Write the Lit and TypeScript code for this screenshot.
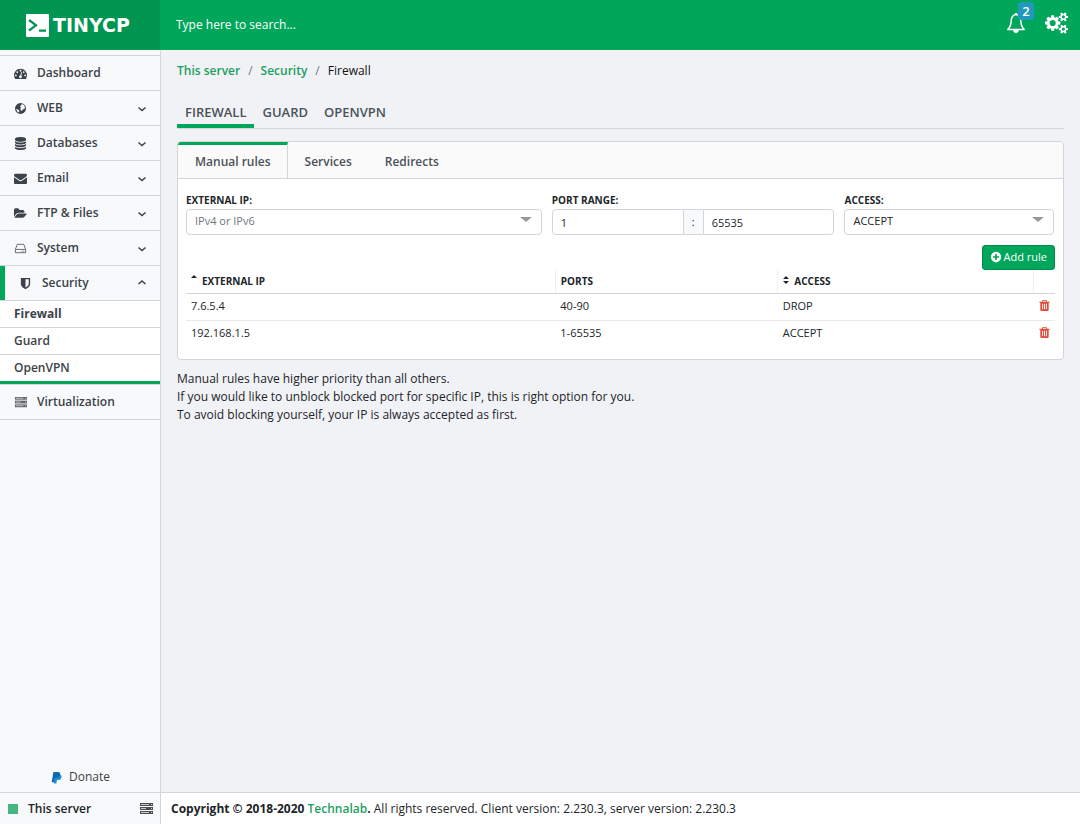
import { LitElement, html, css, svg, nothing } from "lit";
import { customElement, state } from "lit/decorators.js";
import { classMap } from "lit/directives/class-map.js";

const fa = (d: string, w = 1792) =>
  html`<svg class="fa" viewBox="0 0 ${w} 1792" aria-hidden="true">${svg`<path d=${d}></path>`}</svg>`;

const TACHOMETER =
  "M384 1152q0-53-37.5-90.5t-90.5-37.5-90.5 37.5-37.5 90.5 37.5 90.5 90.5 37.5 90.5-37.5 37.5-90.5zm192-448q0-53-37.5-90.5t-90.5-37.5-90.5 37.5-37.5 90.5 37.5 90.5 90.5 37.5 90.5-37.5 37.5-90.5zm428 481l101-382q6-26-7.5-48.5t-38.5-29.5-48 6.5-30 39.5l-101 382q-60 5-107 43.5t-63 98.5q-20 77 20 146t117 89 146-20 89-117q16-60-6-117t-72-91zm660-33q0-53-37.5-90.5t-90.5-37.5-90.5 37.5-37.5 90.5 37.5 90.5 90.5 37.5 90.5-37.5 37.5-90.5zm-640-640q0-53-37.5-90.5t-90.5-37.5-90.5 37.5-37.5 90.5 37.5 90.5 90.5 37.5 90.5-37.5 37.5-90.5zm448 192q0-53-37.5-90.5t-90.5-37.5-90.5 37.5-37.5 90.5 37.5 90.5 90.5 37.5 90.5-37.5 37.5-90.5zm320 448q0 261-141 483-19 29-54 29h-1402q-35 0-54-29-141-221-141-483 0-182 71-348t191-286 286-191 348-71 348 71 286 191 191 286 71 348z";
const DATABASE =
  "M896 768q237 0 443-43t325-127v170q0 69-103 128t-280 93.5-385 34.5-385-34.5-280-93.5-103-128v-170q119 84 325 127t443 43zm0 768q237 0 443-43t325-127v170q0 69-103 128t-280 93.5-385 34.5-385-34.5-280-93.5-103-128v-170q119 84 325 127t443 43zm0-384q237 0 443-43t325-127v170q0 69-103 128t-280 93.5-385 34.5-385-34.5-280-93.5-103-128v-170q119 84 325 127t443 43zm0-1152q208 0 385 34.5t280 93.5 103 128v128q0 69-103 128t-280 93.5-385 34.5-385-34.5-280-93.5-103-128v-128q0-69 103-128t280-93.5 385-34.5z";
const ENVELOPE =
  "M1792 710v794q0 66-47 113t-113 47h-1472q-66 0-113-47t-47-113v-794q44 49 101 87 362 246 497 345 57 42 92.5 65.5t94.5 48 110 24.5h2q51 0 110-24.5t94.5-48 92.5-65.5q170-123 498-345 57-39 100-87zm0-294q0 79-49 151t-122 123q-376 261-468 325-10 7-42.5 31t-54 38.5-52 32.5-57.5 27-50 9h-2q-23 0-50-9t-57.5-27-52-32.5-54-38.5-42.5-31q-91-64-262-182.5t-205-142.5q-62-42-117-115.5t-55-136.5q0-78 41.5-130t118.5-52h1472q65 0 112.5 47t47.5 113z";
const FOLDER =
  "M1879 952q0 31-31 66l-336 396q-43 51-120.5 86.5t-143.5 35.5h-1088q-34 0-60.5-13t-26.5-43q0-31 31-66l336-396q43-51 120.5-86.5t143.5-35.5h1088q34 0 60.5 13t26.5 43zm-343-344v160h-832q-94 0-197 47.5t-164 119.5l-337 396-5 6q0-4-.5-12.5t-.5-12.5v-960q0-92 66-158t158-66h320q92 0 158 66t66 158v32h544q92 0 158 66t66 158z";
const SHIELD =
  "M1344 960v-640h-448v1137q119-63 213-137 235-184 235-360zm192-768v768q0 86-33.5 170.5t-83 150-118 127.5-126.5 103-121 77.5-89.5 49.5-42.5 20q-12 6-26 6t-26-6q-16-7-42.5-20t-89.5-49.5-121-77.5-126.5-103-118-127.5-83-150-33.5-170.5v-768q0-26 19-45t45-19h1152q26 0 45 19t19 45z";
const PLUS_CIRCLE =
  "M1344 960v-128q0-26-19-45t-45-19h-256v-256q0-26-19-45t-45-19h-128q-26 0-45 19t-19 45v256h-256q-26 0-45 19t-19 45v128q0 26 19 45t45 19h256v256q0 26 19 45t45 19h128q26 0 45-19t19-45v-256h256q26 0 45-19t19-45zm320-64q0 209-103 385.5t-279.5 279.5-385.5 103-385.5-103-279.5-279.5-103-385.5 103-385.5 279.5-279.5 385.5-103 385.5 103 279.5 279.5 103 385.5z";
const TRASH =
  "M704 1376v-704q0-14-9-23t-23-9h-64q-14 0-23 9t-9 23v704q0 14 9 23t23 9h64q14 0 23-9t9-23zm256 0v-704q0-14-9-23t-23-9h-64q-14 0-23 9t-9 23v704q0 14 9 23t23 9h64q14 0 23-9t9-23zm256 0v-704q0-14-9-23t-23-9h-64q-14 0-23 9t-9 23v704q0 14 9 23t23 9h64q14 0 23-9t9-23zm-544-992h448l-48-117q-7-9-17-11h-317q-10 2-17 11zm928 32v64q0 14-9 23t-23 9h-96v948q0 83-47 143.5t-113 60.5h-832q-66 0-113-58.5t-47-141.5v-952h-96q-14 0-23-9t-9-23v-64q0-14 9-23t23-9h309l70-167q15-37 54-63t79-26h320q40 0 79 26t54 63l70 167h309q14 0 23 9t9 23z";
const COGS =
  "M896 896q0-106-75-181t-181-75-181 75-75 181 75 181 181 75 181-75 75-181zm768 512q0-52-38-90t-90-38-90 38-38 90q0 53 37.5 90.5t90.5 37.5 90.5-37.5 37.5-90.5zm0-1024q0-52-38-90t-90-38-90 38-38 90q0 53 37.5 90.5t90.5 37.5 90.5-37.5 37.5-90.5zm-384 421v185q0 10-7 19.5t-16 10.5l-155 24q-11 35-32 76 34 48 90 115 7 11 7 20 0 12-7 19-23 30-82.5 89.5t-78.5 59.5q-11 0-21-7l-115-90q-37 19-77 31-11 108-23 155-7 24-30 24h-186q-11 0-20-7.5t-10-17.5l-23-153q-34-10-75-31l-118 89q-7 7-20 7-11 0-21-8-144-133-144-160 0-9 7-19 10-14 41-53t47-61q-23-44-35-82l-152-24q-10-1-17-9.5t-7-19.5v-185q0-10 7-19.5t16-10.5l155-24q11-35 32-76-34-48-90-115-7-11-7-20 0-12 7-20 22-30 82-89t79-59q11 0 21 7l115 90q34-18 77-32 11-108 23-154 7-24 30-24h186q11 0 20 7.5t10 17.5l23 153q34 10 75 31l118-89q8-7 20-7 11 0 21 8 144 133 144 160 0 8-7 19-12 16-42 54t-45 60q23 48 34 82l152 23q10 2 17 10.5t7 19.5zm640 533v140q0 16-149 31-12 27-30 52 51 113 51 138 0 4-4 7-122 71-124 71-8 0-46-47t-52-68q-20 2-30 2t-30-2q-14 21-52 68t-46 47q-2 0-124-71-4-3-4-7 0-25 51-138-18-25-30-52-149-15-149-31v-140q0-16 149-31 13-29 30-52-51-113-51-138 0-4 4-7 4-2 35-20t59-34 30-16q8 0 46 46.5t52 67.5q20-2 30-2t30 2q51-71 92-112l6-2q4 0 124 70 4 3 4 7 0 25-51 138 17 23 30 52 149 15 149 31zm0-1024v140q0 16-149 31-12 27-30 52 51 113 51 138 0 4-4 7-122 71-124 71-8 0-46-47t-52-68q-20 2-30 2t-30-2q-14 21-52 68t-46 47q-2 0-124-71-4-3-4-7 0-25 51-138-18-25-30-52-149-15-149-31v-140q0-16 149-31 13-29 30-52-51-113-51-138 0-4 4-7 4-2 35-20t59-34 30-16q8 0 46 46.5t52 67.5q20-2 30-2t30 2q51-71 92-112l6-2q4 0 124 70 4 3 4 7 0 25-51 138 17 23 30 52 149 15 149 31z";

const globe = html`<svg class="fa" viewBox="0 0 14 14" aria-hidden="true">
  <circle cx="7" cy="7" r="5.900"></circle>
  <path class="cut" d="M7.800 2.200 10.400 3l1.400 2.400-.6 2.200-1.600.2L8.600 9.800 7.200 9 6.800 7.200l1-1.400-1.200-.4.2-1.400 1.400-.4zM2.200 7.600l2.200.4 1.400 1.400-.4 2-1.600-.6z"></path>
</svg>`;
const drive = html`<svg class="fa line" viewBox="0 0 14 14" aria-hidden="true">
  <path d="M1.500 8 3.500 2.500h7l2 5.500v3.500h-11zM1.500 8h11M8 10h1M10 10h1"></path>
</svg>`;
const server = html`<svg class="fa" viewBox="0 0 14 14" aria-hidden="true">
  <path opacity=".8" d="M1 1h13v4H1zM1 5h13v4H1zM1 9h13v3H1z"></path>
  <path class="rule" d="M1 4.500h13M1 8.500h13"></path>
  <path class="dim" d="M2 2.500h8M2 6.500h5M2 10.500h8M12 2.500h1M12 6.500h1M12 10.500h1"></path>
</svg>`;
const paypal = html`<svg class="fa" viewBox="0 0 14 14" aria-hidden="true">
  <path fill="#1c8fd8" d="M5 4h5.500c1.800.2 2.200 1.500 1.800 3-.5 2-1.800 2.800-3.700 2.800H7.500L6.800 13.500H4.200z"></path>
  <path fill="#0f68b4" d="M3.700 1h4.500c2.200 0 3.200 1 2.800 3.100C10.500 6.500 9 7.400 6.900 7.400H5.300L4.500 12H1.800z"></path>
</svg>`;

interface NavEntry {
  label: string;
  icon: unknown;
  menu?: boolean;
  children?: string[];
}

const NAV: NavEntry[] = [
  { label: "Dashboard", icon: fa(TACHOMETER) },
  { label: "WEB", icon: globe, menu: true },
  { label: "Databases", icon: fa(DATABASE), menu: true },
  { label: "Email", icon: fa(ENVELOPE), menu: true },
  { label: "FTP & Files", icon: fa(FOLDER, 1920), menu: true },
  { label: "System", icon: drive, menu: true },
  { label: "Security", icon: fa(SHIELD), menu: true, children: ["Firewall", "Guard", "OpenVPN"] },
  { label: "Virtualization", icon: server },
];

const base = css`
  * { box-sizing: border-box; }
  a { color: inherit; text-decoration: none; }
  button, input, select { font: inherit; color: inherit; margin: 0; }
  .fa { display: block; width: 14px; height: 14px; fill: currentColor; flex: none; }
  .line { fill: none; stroke: currentColor; stroke-width: 1; opacity: 0.8; }
  .cut { fill: #f8f9fb; }
  .rule { fill: none; stroke: #f8f9fb; stroke-width: 1; }
  .dim { fill: none; stroke: #c4c8cb; stroke-width: 1; }
`;

@customElement("tcp-header")
class TcpHeader extends LitElement {
  static styles = [
    base,
    css`
      :host { display: flex; height: 50px; background: #00a65a; color: #fff; }
      .logo { display: flex; align-items: center; gap: 4px; width: 160px; padding-left: 26px; background: #009551; font: 700 19px/50px "DejaVu Sans", sans-serif; }
      .mark { width: 23px; height: 23px; }
      .search { flex: 1; min-width: 0; padding: 0 16px; border: 0; background: none; outline: none; }
      .search::placeholder { color: #fff; opacity: 1; }
      .actions { display: flex; align-items: center; gap: 19px; padding: 0 12px 4px 0; }
      .action { position: relative; padding: 0; border: 0; background: none; }
      .bell { display: block; width: 20px; height: 22px; }
      .cogs { width: 23px; height: 22px; }
      .badge { position: absolute; left: 12px; top: -10px; width: 16px; border-radius: 3px; background: #2199bd; font-size: 13px; font-weight: 600; line-height: 18px; text-align: center; }
    `,
  ];
  render() {
    return html`
      <a class="logo" href="#">
        <svg class="mark" viewBox="0 0 23 23" aria-hidden="true">
          <rect width="23" height="23" rx="1" fill="#fff"></rect>
          <path d="M3 6 10 11.300 3 16.500M13 16.700h7" fill="none" stroke="#009551" stroke-width="2.200"></path>
        </svg>
        <span>TINYCP</span>
      </a>
      <input class="search" type="search" placeholder="Type here to search..." aria-label="Search" />
      <div class="actions">
        <button class="action" aria-label="Notifications">
          <svg class="bell" viewBox="0 0 20 22" aria-hidden="true">
            <path d="M10 2.500C6.500 3 5.300 5.500 5.200 9 5.100 13 3.800 15.500 1.800 17.500h16.400C16.200 15.500 14.900 13 14.800 9 14.700 5.500 13.500 3 10 2.500z" fill="none" stroke="#fff" stroke-width="1.500" stroke-linejoin="round"></path>
            <path d="M9 1h2v2H9zM7 18h6q-.5 3-3 3t-3-3z" fill="#fff"></path>
          </svg>
          <span class="badge">2</span>
        </button>
        <button class="action" aria-label="Settings">
          <svg class="fa cogs" viewBox="0 0 1920 1792" aria-hidden="true"><path d=${COGS}></path></svg>
        </button>
      </div>
    `;
  }
}

@customElement("tcp-sidebar")
class TcpSidebar extends LitElement {
  static styles = [
    base,
    css`
      :host { display: flex; flex-direction: column; padding-top: 5px; border-right: 1px solid #d2d5d9; background: #f8f9fb; color: #3b4249; }
      .list { margin: 0; padding: 0; list-style: none; border-top: 1px solid #d2d5d9; }
      .item { border-bottom: 1px solid #d2d5d9; }
      .link { display: flex; align-items: center; height: 34px; padding: 0 12px 0 14px; font-weight: 600; }
      .link .fa { width: 13px; height: 13px; margin-right: 10px; }
      .open { border-left: 5px solid #00a65a; }
      .label { flex: 1; }
      .chevron { width: 12px; height: 12px; fill: none; stroke: currentColor; stroke-width: 1.500; }
      .sub { margin: 0; padding: 0; list-style: none; border-top: 1px solid #d2d5d9; border-bottom: 3px solid #00a65a; background: #fff; }
      .subitem + .subitem { border-top: 1px solid #d2d5d9; }
      .sublink { display: block; padding: 0 14px; line-height: 26px; font-weight: 600; }
      .current { font-weight: 700; }
      .donate { display: flex; justify-content: center; align-items: center; gap: 6px; margin-top: auto; padding-bottom: 6px; line-height: 18px; font-weight: 500; }
      .donate .fa { width: 13px; height: 13px; }
    `,
  ];
  render() {
    return html`
      <ul class="list">
        ${NAV.map(
          (n) => html`<li class="item">
            <a class=${classMap({ link: true, open: !!n.children })} href="#">
              ${n.icon}<span class="label">${n.label}</span>
              ${n.menu
                ? html`<svg class="chevron" viewBox="0 0 12 12" aria-hidden="true"><path d=${n.children ? "M2.500 7 6 4l3.500 3" : "M2.500 5.500 6 8.500l3.500-3"}></path></svg>`
                : nothing}
            </a>
            ${n.children
              ? html`<ul class="sub">
                  ${n.children.map(
                    (c, i) => html`<li class="subitem"><a class=${classMap({ sublink: true, current: i === 0 })} href="#">${c}</a></li>`
                  )}
                </ul>`
              : nothing}
          </li>`
        )}
      </ul>
      <a class="donate" href="#">${paypal}<span>Donate</span></a>
    `;
  }
}

@customElement("firewall-rules")
class FirewallRules extends LitElement {
  @state() private rules = [
    { ip: "7.6.5.4", ports: "40-90", access: "DROP" },
    { ip: "192.168.1.5", ports: "1-65535", access: "ACCEPT" },
  ];
  static styles = [
    base,
    css`
      :host { display: block; border: 1px solid #d2d5d9; border-radius: 4px; background: #fff; overflow: hidden; }
      .tabs { display: flex; border-bottom: 1px solid #d2d5d9; background: #fafafa; color: #4b5259; }
      .tab { height: 36px; padding: 3px 16px 0 17px; border: 0; background: none; font-weight: 600; }
      .active { padding-top: 0; border-top: 3px solid #00a65a; border-right: 1px solid #d2d5d9; }
      .body { padding: 13px 8px 11px; }
      .form { display: grid; grid-template-columns: 5fr 4fr 3fr; margin: 0 -4px 0 -5px; }
      .field { min-width: 0; padding: 0 5px; }
      .caption { display: block; font-size: 10px; font-weight: 700; line-height: 17px; text-transform: uppercase; }
      .pick { position: relative; display: block; }
      .pick::after { content: ""; position: absolute; right: 10px; top: 8px; border: 6px solid transparent; border-top: 5px solid #999; border-bottom: 0; pointer-events: none; }
      .control { display: block; width: 100%; min-width: 0; height: 26px; padding: 0 8px; border: 1px solid #d2d5d9; border-radius: 4px; background: #fff; font-size: 11px; appearance: none; outline: none; }
      .pick .control { padding-bottom: 2px; }
      .muted { color: #6f777e; }
      .range { display: flex; }
      .from { flex: 1; border-radius: 4px 0 0 4px; }
      .to { flex: 1; border-radius: 0 4px 4px 0; }
      .colon { width: 19px; border: solid #d2d5d9; border-width: 1px 0; background: #f8f9fb; font-size: 11px; line-height: 23px; text-align: center; }
      .bar { display: flex; justify-content: flex-end; padding-top: 10px; }
      .add { display: flex; align-items: center; gap: 2px; height: 25px; padding: 0 7px 2px; border: 1px solid #008d4c; border-radius: 3px; background: #00a65a; color: #fff; font-size: 11px; }
      .add .fa { width: 12px; height: 12px; }
      .grid { width: 100%; table-layout: fixed; border-collapse: collapse; font-size: 11px; }
      .ip { width: 42.500%; }
      .ports { width: 25.600%; }
      .drop { width: 22px; }
      .head { height: 23px; padding: 0 5px; border-bottom: 1px solid #d2d5d9; text-align: left; font-size: 10px; font-weight: 700; text-transform: uppercase; }
      .head + .head { border-left: 1px solid #eef0f2; }
      .sort { width: 6px; height: 10px; margin-right: 5px; fill: currentColor; }
      .cell { height: 27px; padding: 0 5px 2px; border-bottom: 1px solid #e8eaec; }
      .row:last-child .cell { border-bottom-color: transparent; }
      .del { display: block; padding: 0; border: 0; background: none; color: #dd4b39; }
      .del .fa { width: 13px; height: 13px; }
    `,
  ];
  private remove(i: number) {
    this.rules = this.rules.filter((_, n) => n !== i);
  }
  render() {
    return html`
      <div class="tabs" role="tablist">
        <button class="tab active" role="tab">Manual rules</button>
        <button class="tab" role="tab">Services</button>
        <button class="tab" role="tab">Redirects</button>
      </div>
      <div class="body">
        <div class="form">
          <div class="field">
            <label class="caption" for="ip">External IP:</label>
            <span class="pick"><select class="control muted" id="ip"><option>IPv4 or IPv6</option></select></span>
          </div>
          <div class="field">
            <label class="caption" for="from">Port range:</label>
            <div class="range">
              <input class="control from" id="from" .value=${"1"} />
              <span class="colon">:</span>
              <input class="control to" aria-label="Last port" .value=${"65535"} />
            </div>
          </div>
          <div class="field">
            <label class="caption" for="access">Access:</label>
            <span class="pick"><select class="control" id="access"><option>ACCEPT</option><option>DROP</option></select></span>
          </div>
        </div>
        <div class="bar"><button class="add">${fa(PLUS_CIRCLE)}Add rule</button></div>
        <table class="grid">
          <thead>
            <tr>
              <th class="head ip"><svg class="sort" viewBox="0 0 6 10" aria-hidden="true"><path d="M0 3 3 0l3 3z"></path></svg>External IP</th>
              <th class="head ports">Ports</th>
              <th class="head"><svg class="sort" viewBox="0 0 6 10" aria-hidden="true"><path d="M0 4 3 1l3 3zM0 6l3 3 3-3z"></path></svg>Access</th>
              <th class="head drop"></th>
            </tr>
          </thead>
          <tbody>
            ${this.rules.map(
              (r, i) => html`<tr class="row">
                <td class="cell">${r.ip}</td>
                <td class="cell">${r.ports}</td>
                <td class="cell">${r.access}</td>
                <td class="cell"><button class="del" aria-label="Delete rule" @click=${() => this.remove(i)}>${fa(TRASH)}</button></td>
              </tr>`
            )}
          </tbody>
        </table>
      </div>
    `;
  }
}

@customElement("app-root")
class AppRoot extends LitElement {
  static styles = [
    base,
    css`
      :host { display: grid; grid-template: 50px 1fr 32px / 161px 1fr; min-height: 100vh; background: #f1f2f6; color: #212529; font: 12px/18px "Open Sans", sans-serif; }
      .top { grid-column: 1 / -1; }
      .content { min-width: 0; padding: 12px 16px; }
      .crumbs { display: flex; gap: 8px; color: #6f777e; }
      .crumb { color: #1c9f5f; font-weight: 600; }
      .here { color: #111; font-weight: 500; }
      .sections { display: flex; margin: 21px 0 12px; border-bottom: 1px solid #d2d5d9; color: #4b5259; font-size: 13px; font-weight: 600; }
      .section { height: 27px; padding: 0 8px; line-height: 22px; }
      .chosen { border-bottom: 4px solid #00a65a; }
      .note { margin: 10px 0; }
      .server { display: flex; align-items: center; gap: 10px; padding: 0 7px 0 8px; border: solid #d2d5d9; border-width: 1px 1px 0 0; background: #f8f9fb; font-weight: 600; }
      .status { width: 10px; height: 10px; background: #45b581; }
      .name { flex: 1; }
      .foot { padding: 0 10px; border-top: 1px solid #d2d5d9; background: #fff; line-height: 31px; }
    `,
  ];
  render() {
    return html`
      <tcp-header class="top"></tcp-header>
      <tcp-sidebar></tcp-sidebar>
      <main class="content">
        <nav class="crumbs" aria-label="Breadcrumb">
          <a class="crumb" href="#">This server</a><span>/</span>
          <a class="crumb" href="#">Security</a><span>/</span>
          <span class="here">Firewall</span>
        </nav>
        <nav class="sections">
          <a class="section chosen" href="#">FIREWALL</a>
          <a class="section" href="#">GUARD</a>
          <a class="section" href="#">OPENVPN</a>
        </nav>
        <firewall-rules></firewall-rules>
        <p class="note">
          Manual rules have higher priority than all others.<br />
          If you would like to unblock blocked port for specific IP, this is right option for you.<br />
          To avoid blocking yourself, your IP is always accepted as first.
        </p>
      </main>
      <div class="server"><span class="status"></span><span class="name">This server</span>${server}</div>
      <footer class="foot">
        <b>Copyright © 2018-2020 </b><a class="crumb" href="#">Technalab</a><b>.</b> All rights reserved. Client version: 2.230.3, server version: 2.230.3
      </footer>
    `;
  }
}
